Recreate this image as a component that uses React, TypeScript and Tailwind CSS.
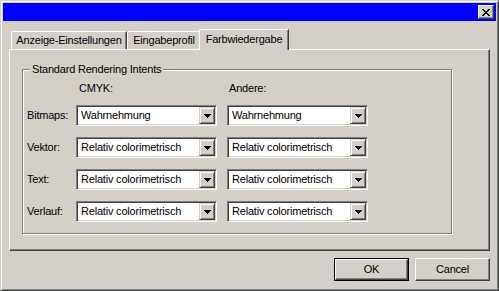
import React from "react";

const raised =
  "border border-t-white border-l-white border-r-[#404040] border-b-[#404040] shadow-[inset_-1px_-1px_0_#808080]";

function CloseGlyph() {
  const rows = [
    "xx....xx",
    ".xx..xx.",
    "..xxxx..",
    "...xx...",
    "..xxxx..",
    ".xx..xx.",
    "xx....xx",
  ];
  const rects: React.ReactElement[] = [];
  rows.forEach((r, y) =>
    r.split("").forEach((c, x) => {
      if (c === "x") rects.push(<rect key={`${x}-${y}`} x={x} y={y} width={1} height={1} fill="#000" />);
    })
  );
  return (
    <svg width="8" height="7" viewBox="0 0 8 7" shapeRendering="crispEdges">
      {rects}
    </svg>
  );
}

function Arrow() {
  return (
    <svg width="7" height="4" viewBox="0 0 7 4" shapeRendering="crispEdges">
      <rect x="0" y="0" width="7" height="1" fill="#000" />
      <rect x="1" y="1" width="5" height="1" fill="#000" />
      <rect x="2" y="2" width="3" height="1" fill="#000" />
      <rect x="3" y="3" width="1" height="1" fill="#000" />
    </svg>
  );
}

function Combo({ value }: { value: string }) {
  return (
    <div className="w-[141px] h-[21px] flex border border-t-[#808080] border-l-[#808080] border-r-white border-b-white shadow-[inset_1px_1px_0_#404040,inset_-1px_-1px_0_#d4d0c8] p-[1px]">
      <div className="flex-1 bg-white flex items-center pl-[3px] whitespace-nowrap overflow-hidden">{value}</div>
      <div className={`w-[16px] h-[17px] bg-[#d4d0c8] flex items-center justify-center border border-t-[#d4d0c8] border-l-[#d4d0c8] border-r-[#404040] border-b-[#404040] shadow-[inset_1px_1px_0_#fff,inset_-1px_-1px_0_#808080]`}>
        <Arrow />
      </div>
    </div>
  );
}

function Row({ label, a, b }: { label: string; a: string; b: string }) {
  return (
    <div className="flex items-center h-[21px]">
      <div className="w-[49px]">{label}</div>
      <Combo value={a} />
      <div className="w-[10px]" />
      <Combo value={b} />
    </div>
  );
}

function Tab({ label, width, selected }: { label: string; width: number; selected?: boolean }) {
  if (selected) {
    return (
      <div
        className="h-[21px] -mb-[1px] -mx-[2px] relative z-10 bg-[#d4d0c8] border-t border-l border-r border-t-white border-l-white border-r-[#404040] shadow-[inset_-1px_0_0_#808080] rounded-tl-[2px] flex items-start justify-center pt-[3px]"
        style={{ width: width + 4 }}
      >
        {label}
      </div>
    );
  }
  return (
    <div
      className="h-[18px] bg-[#d4d0c8] border-t border-l border-r border-t-white border-l-white border-r-[#404040] shadow-[inset_-1px_0_0_#808080] rounded-tl-[2px] flex items-start justify-center pt-[2px]"
      style={{ width }}
    >
      {label}
    </div>
  );
}

export default function App() {
  return (
    <div className="w-[499px] h-[291px] bg-[#d4d0c8] border border-t-[#d4d0c8] border-l-[#d4d0c8] border-r-[#404040] border-b-[#404040] shadow-[inset_1px_1px_0_#fff,inset_-1px_-1px_0_#808080] p-[2px] flex flex-col font-['Liberation_Sans',Arial,sans-serif] text-[11px] leading-[13px] tracking-[-0.2px] text-black select-none">
      {/* Title bar */}
      <div className="h-[18px] bg-[#0000ff] flex items-start justify-end pt-[2px] pr-[2px]">
        <div className={`w-[16px] h-[14px] bg-[#d4d0c8] flex items-center justify-center ${raised}`}>
          <CloseGlyph />
        </div>
      </div>

      {/* Tabs + panel */}
      <div className="mt-[8px] mx-[6px] flex flex-col">
        <div className="flex items-end h-[20px] pl-[2px]">
          <Tab label="Anzeige-Einstellungen" width={116} />
          <Tab label="Eingabeprofil" width={74} />
          <Tab label="Farbwiedergabe" width={86} selected />
        </div>
        <div className="h-[202px] border border-t-white border-l-white border-r-[#404040] border-b-[#404040] shadow-[inset_-1px_-1px_0_#808080] pt-[19px] pl-[12px]">
          {/* Group box */}
          <div className="relative w-[430px] h-[165px] border border-[#808080] shadow-[1px_1px_0_#fff,inset_1px_1px_0_#fff] pt-[12px] pl-[4px]">
            <div className="absolute left-[7px] -top-[7px] px-[2px] bg-[#d4d0c8]">Standard Rendering Intents</div>
            <div className="flex h-[13px]">
              <div className="w-[49px]" />
              <div className="w-[141px] pl-[3px]">CMYK:</div>
              <div className="w-[10px]" />
              <div className="w-[141px] pl-[2px]">Andere:</div>
            </div>
            <div className="mt-[10px] flex flex-col gap-[11px]">
              <Row label="Bitmaps:" a="Wahrnehmung" b="Wahrnehmung" />
              <Row label="Vektor:" a="Relativ colorimetrisch" b="Relativ colorimetrisch" />
              <Row label="Text:" a="Relativ colorimetrisch" b="Relativ colorimetrisch" />
              <Row label="Verlauf:" a="Relativ colorimetrisch" b="Relativ colorimetrisch" />
            </div>
          </div>
        </div>
      </div>

      {/* Buttons */}
      <div className="mt-[7px] flex justify-end gap-[6px] pr-[6px]">
        <div className="w-[75px] h-[23px] border border-black">
          <div className={`w-full h-full flex items-center justify-center ${raised}`}>OK</div>
        </div>
        <div className={`w-[75px] h-[23px] flex items-center justify-center ${raised}`}>Cancel</div>
      </div>
    </div>
  );
}
